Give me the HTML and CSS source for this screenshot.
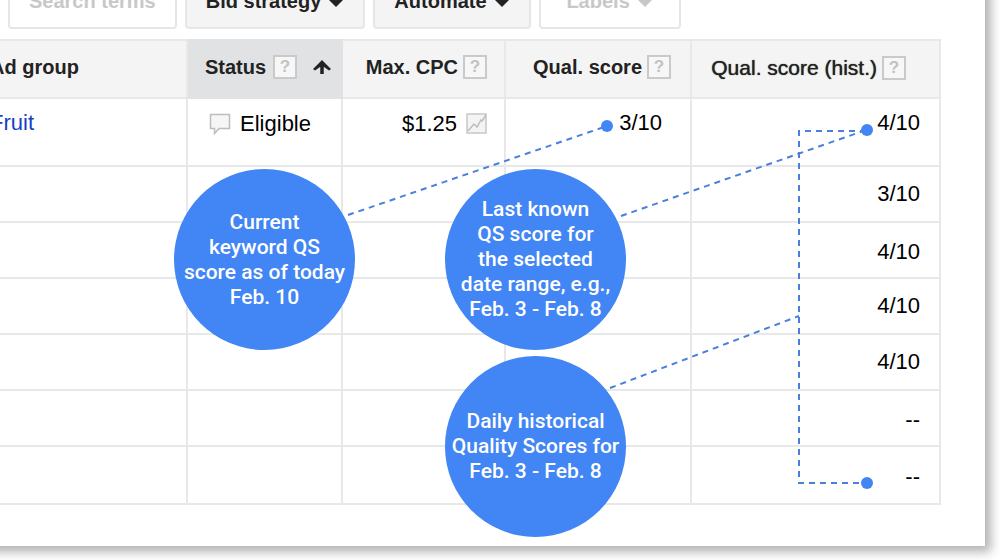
FILE: index.html
```html
<!DOCTYPE html>
<html lang="en">
<head>
    <meta charset="UTF-8">
    <meta name="viewport" content="width=device-width, initial-scale=1.0">
    <title>Quality Score History</title>
    <link rel="stylesheet" href="styles.css">
</head>
<body>
    <main class="panel">
        <div class="toolbar">
            <button class="tool muted" type="button">Search terms</button>
            <button class="tool" type="button">Bid strategy <svg class="caret" viewBox="0 0 16 8"><path d="M0 0h16L8 8z"/></svg></button>
            <button class="tool" type="button">Automate <svg class="caret" viewBox="0 0 16 8"><path d="M0 0h16L8 8z"/></svg></button>
            <button class="tool muted wide" type="button">Labels <svg class="caret" viewBox="0 0 16 8"><path d="M0 0h16L8 8z"/></svg></button>
        </div>

        <div class="table-wrap">
            <table class="keywords">
                <colgroup>
                    <col>
                    <col class="col-status">
                    <col class="col-cpc">
                    <col class="col-score">
                    <col class="col-hist">
                </colgroup>
                <thead>
                    <tr>
                        <th class="group">Ad group</th>
                        <th class="status sorted"><span class="head">Status <button class="help" type="button">?</button><svg class="arrow" viewBox="0 0 18 14"><path d="M9 3v11" stroke="#222" stroke-width="3.500"/><path d="M9 0l9 9-2 1.500L11 7H7l-5 3.500L0 9z" fill="#222"/></svg></span></th>
                        <th class="cpc"><span class="head">Max. CPC <button class="help" type="button">?</button></span></th>
                        <th class="score"><span class="head">Qual. score <button class="help" type="button">?</button></span></th>
                        <th class="hist"><span class="head">Qual. score (hist.) <button class="help" type="button">?</button></span></th>
                    </tr>
                </thead>
                <tbody>
                    <tr class="first">
                        <td class="group"><a href="#">Fruit</a></td>
                        <td class="status"><span class="cell"><svg class="bubble-icon" viewBox="0 0 22 22"><path d="M1.500 1.500h19v14H10l-4.500 5v-5h-4z" fill="#f6f6f6" stroke="#bdbdbd" stroke-width="1.500"/></svg>Eligible</span></td>
                        <td class="cpc"><span class="cell">$1.25<svg class="chart-icon" viewBox="0 0 21 21"><path d="M1 1h19v19H1z" fill="#f4f4f4" stroke="#c6c6c6" stroke-width="1.500"/><path d="M2 18l6-7 3 3 4-7 1 1 4-6" fill="none" stroke="#bdbdbd" stroke-width="1.500"/></svg></span></td>
                        <td class="score">3/10</td>
                        <td class="hist">4/10</td>
                    </tr>
                    <tr><td></td><td></td><td></td><td></td><td class="hist">3/10</td></tr>
                    <tr><td></td><td></td><td></td><td></td><td class="hist low">4/10</td></tr>
                    <tr><td></td><td></td><td></td><td></td><td class="hist">4/10</td></tr>
                    <tr><td></td><td></td><td></td><td></td><td class="hist">4/10</td></tr>
                    <tr><td></td><td></td><td></td><td></td><td class="hist low">--</td></tr>
                    <tr class="last"><td></td><td></td><td></td><td></td><td class="hist low">--</td></tr>
                </tbody>
            </table>

            <!-- callouts over the table, tied to its right edge -->
            <div class="notes">
                <svg class="lines" viewBox="0 0 780 500">
                    <g fill="none" stroke="#4a80dc" stroke-width="2" stroke-dasharray="6 5">
                        <path d="M187 176L446 87"/>
                        <path d="M460 177L705 91"/>
                        <path d="M449 349L638 277"/>
                        <path d="M705 92H638V444H705"/>
                    </g>
                    <g fill="#4285f4">
                        <circle cx="446" cy="87" r="6"/>
                        <circle cx="706" cy="91" r="6"/>
                        <circle cx="706" cy="444" r="6"/>
                    </g>
                </svg>
                <p class="note current">Current<br>keyword QS<br>score as of today<br>Feb. 10</p>
                <p class="note known">Last known<br>QS score for<br>the selected<br>date range, e.g.,<br>Feb. 3 - Feb. 8</p>
                <p class="note daily">Daily historical<br>Quality Scores for<br>Feb. 3 - Feb. 8</p>
            </div>
        </div>
    </main>
</body>
</html>
```
FILE: styles.css
```css
* {
    box-sizing: border-box;
}
body {
    margin: 0;
    background-color: #fff;
    font-family: "Liberation Sans", Arial, sans-serif;
    font-size: 22px;
    color: #000;
    overflow: hidden;
}
/* the panel runs off the top and left of the window */
.panel {
    margin: -28px 15px 14px -30px;
    padding: 0 44px 41px 0;
    background-color: #fff;
    box-shadow: 4px 4px 10px 2px rgba(0, 0, 0, 0.3);
}
.toolbar {
    display: flex;
    gap: 8px;
    padding-left: 38px;
    margin-bottom: 10px;
}
.tool {
    display: flex;
    align-items: center;
    justify-content: center;
    gap: 7px;
    height: 57px;
    padding: 2px 19px 0;
    border: 2px solid #e6e6e6;
    border-radius: 4px;
    background-color: #f4f4f4;
    color: #222;
    font: bold 20px "Liberation Sans", Arial, sans-serif;
    white-space: nowrap;
}
.tool.muted {
    background-color: #fff;
    color: #c8c8c8;
}
.tool.wide {
    min-width: 142px;
}
.caret {
    width: 16px;
    height: 8px;
    margin-top: 2px;
    fill: currentColor;
}
.table-wrap {
    position: relative;
}
.keywords {
    width: 100%;
    table-layout: fixed;
    border-collapse: collapse;
}
.col-status {
    width: 155px;
}
.col-cpc {
    width: 163px;
}
.col-score {
    width: 186px;
}
.col-hist {
    width: 249px;
}
.keywords th,
.keywords td {
    height: 56px;
    padding: 0;
    border: 2px solid #e8e8e8;
    text-align: right;
}
.keywords th {
    height: 58px;
    padding-bottom: 4px;
    background-color: #f4f4f4;
    color: #222;
    font-size: 20px;
    white-space: nowrap;
}
.keywords .sorted {
    background-color: #e1e2e4;
    border-color: #e1e2e4;
}
.keywords .first td {
    height: 68px;
    padding-bottom: 18px;
}
.keywords .last td {
    height: 58px;
}
.keywords .low {
    padding-top: 4px;
}
.keywords .group {
    padding-left: 18px;
    text-align: left;
}
.keywords th.status {
    padding-right: 10px;
}
.keywords td.status {
    padding-right: 30px;
}
.keywords .cpc {
    padding-right: 17px;
}
.keywords th.score {
    padding-right: 19px;
}
.keywords td.score {
    padding-right: 28px;
}
.keywords th.hist {
    padding-right: 33px;
    font-size: 21px;
    font-weight: normal;
    text-shadow: 0 0 1px #222;
}
.keywords td.hist {
    padding-right: 19px;
}
.keywords a {
    color: #1540c8;
    text-decoration: none;
}
.head,
.cell {
    display: inline-flex;
    align-items: center;
    gap: 5px;
    vertical-align: middle;
}
.cell {
    gap: 9px;
}
.status .head {
    gap: 7px;
}
.help {
    width: 24px;
    height: 24px;
    padding: 0;
    border: 2px solid #cacaca;
    background-color: #f7f7f7;
    color: #c2c2c2;
    font: bold 17px "Liberation Sans", Arial, sans-serif;
}
.arrow {
    width: 18px;
    height: 14px;
    margin-left: 9px;
}
.bubble-icon {
    width: 22px;
    height: 22px;
}
.chart-icon {
    width: 21px;
    height: 21px;
}
.notes {
    position: absolute;
    top: 0;
    right: 0;
    width: 780px;
    height: 500px;
    pointer-events: none;
}
.lines {
    display: block;
    width: 100%;
    height: 100%;
}
.note {
    position: absolute;
    display: flex;
    align-items: center;
    justify-content: center;
    width: 181px;
    height: 181px;
    margin: 0;
    border-radius: 50%;
    background-color: #4285f4;
    color: #fff;
    font: 500 21px/25px Roboto, sans-serif;
    text-align: center;
    white-space: nowrap;
}
.current {
    top: 130px;
    left: 13px;
}
.known {
    top: 130px;
    left: 284px;
}
.daily {
    top: 317px;
    left: 284px;
}
```
